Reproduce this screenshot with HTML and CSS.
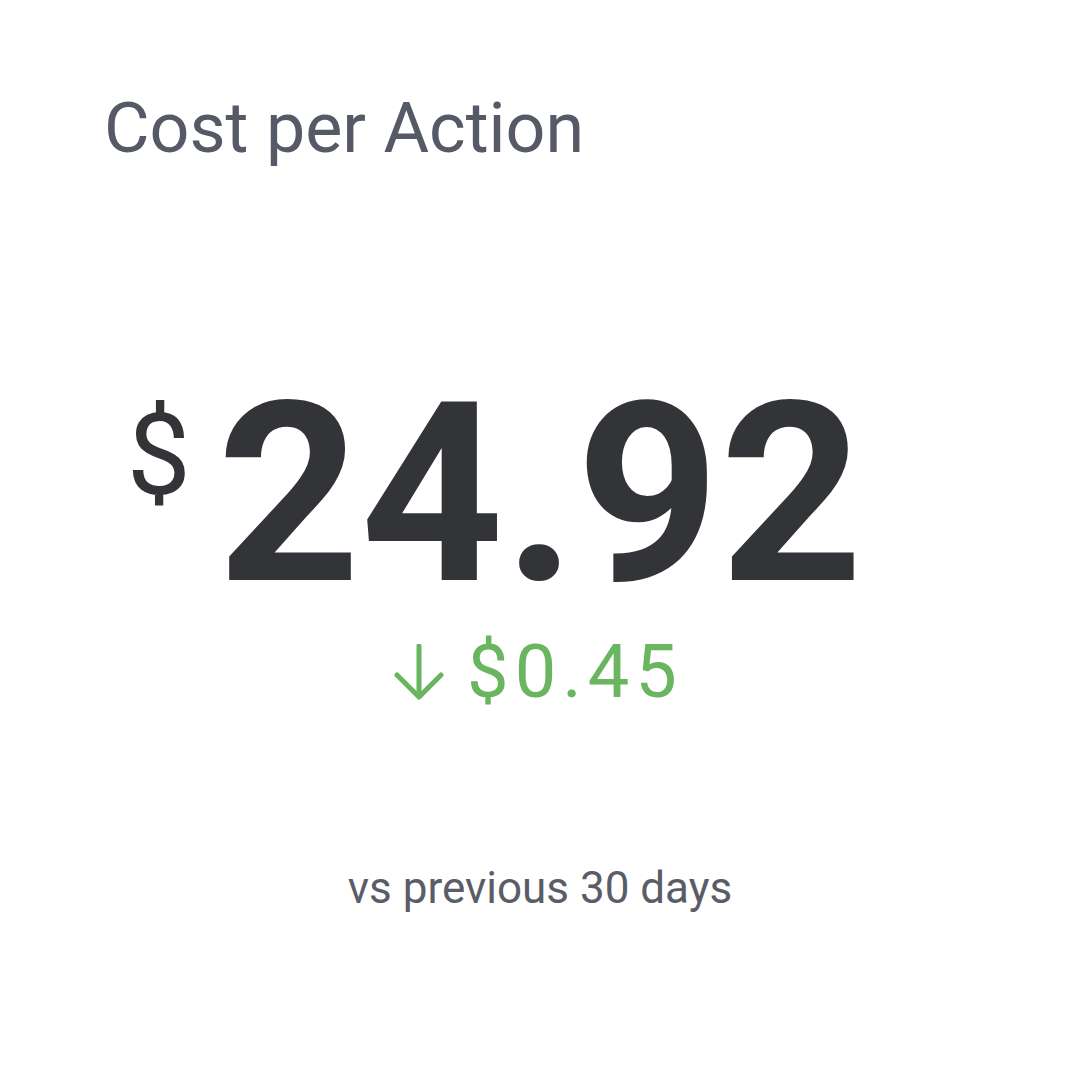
FILE: index.html
```html
<!DOCTYPE html>
<html>
<head>
<meta charset="utf-8">
<link rel="stylesheet" href="styles.css">
</head>
<body>
<div class="card">
  <h1 class="title">Cost per Action</h1>
  <div class="value-row">
    <span class="value"><span class="currency">$</span>24.92</span>
  </div>
  <div class="change">
    <svg class="arrow" width="52" height="56" viewBox="0 0 52 56"><path d="M26 2 V52 M4 31 L26 53 L48 31" fill="none" stroke="#6ab560" stroke-width="5" stroke-linecap="round" stroke-linejoin="round"/></svg>
    <span class="change-amount">$0.45</span>
  </div>
  <div class="period">vs previous 30 days</div>
</div>
</body>
</html>
```

FILE: styles.css
```css
html, body {
  margin: 0;
  padding: 0;
  background: #ffffff;
}
.card {
  width: 1080px;
  height: 1080px;
  box-sizing: border-box;
  padding: 93px 0 0 0;
  display: flex;
  flex-direction: column;
  font-family: Roboto, "Liberation Sans", sans-serif;
}
.title {
  margin: 0 0 0 104px;
  font-size: 70px;
  line-height: 70px;
  font-weight: 400;
  color: #565a66;
}
.value-row {
  margin-top: 207px;
  display: flex;
  justify-content: center;
}
.value {
  position: relative;
  font-size: 250px;
  line-height: 250px;
  font-weight: 700;
  color: #333438;
}
.currency {
  position: absolute;
  right: calc(100% + 26px);
  top: 28px;
  font-size: 114px;
  line-height: 114px;
  font-weight: 400;
}
.change {
  margin-top: 15px;
  margin-left: -10px;
  display: flex;
  justify-content: center;
  align-items: center;
  gap: 22px;
  color: #6ab560;
  height: 73px;
}
.arrow {
  display: block;
}
.change-amount {
  font-size: 74px;
  line-height: 73px;
  letter-spacing: 6px;
  margin-right: -6px;
}
.period {
  margin-top: 158px;
  text-align: center;
  font-size: 44px;
  line-height: 44px;
  color: #5a5d68;
}
```
